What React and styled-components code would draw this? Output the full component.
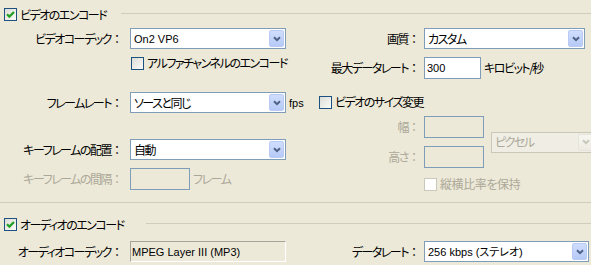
import React from "react";
import styled, { createGlobalStyle } from "styled-components";

const GlobalStyle = createGlobalStyle`
  html, body {
    margin: 0;
    padding: 0;
    background: #ece9d8;
  }
  body {
    width: 591px;
    height: 265px;
    overflow: hidden;
  }
`;

const Panel = styled.div`
  width: 591px;
  height: 265px;
  overflow: hidden;
  background: #ece9d8;
  color: #000;
  font-family: "Noto Sans CJK JP", sans-serif;
  font-size: 12px;
  line-height: 14px;
  font-feature-settings: "palt" 1;
  letter-spacing: -1.5px;
`;

const Header = styled.div`
  display: flex;
  align-items: center;
  height: 13px;
  padding-left: 4px;
  margin-top: ${(p) => p.$top}px;
`;

const HeaderLine = styled.div`
  flex: 1;
  height: 1px;
  margin-left: ${(p) => p.$gap}px;
  margin-top: -2px;
  background: #d0cdbd;
`;

const Divider = styled.div`
  height: 1px;
  margin-top: ${(p) => p.$top}px;
  background: #d0cdbd;
`;

const Body = styled.div`
  display: flex;
  margin-top: ${(p) => p.$top}px;
`;

const LeftCol = styled.div`
  width: 319px;
  display: flex;
  flex-direction: column;
  flex-shrink: 0;
`;

const RightCol = styled.div`
  flex: 1;
  display: flex;
  flex-direction: column;
`;

const Row = styled.div`
  display: flex;
  align-items: center;
  margin-top: ${(p) => p.$top || 0}px;
  padding-left: ${(p) => p.$indent || 0}px;
`;

const LabelBox = styled.span`
  width: ${(p) => p.$w}px;
  margin-right: ${(p) => p.$gap}px;
  text-align: right;
  white-space: nowrap;
  flex-shrink: 0;
  color: ${(p) => (p.$disabled ? "#aca899" : "#000")};
`;

// full-width colon keeps its wide cell, like the old UI font
const Colon = styled.span`
  font-feature-settings: normal;
  letter-spacing: -1px;
`;

const Label = ({ w, gap, disabled, children }) => (
  <LabelBox $w={w} $gap={gap} $disabled={disabled}>
    {children}
    <Colon>：</Colon>
  </LabelBox>
);

const Text = styled.span`
  white-space: nowrap;
  margin-left: ${(p) => p.$gap || 0}px;
  letter-spacing: ${(p) => (p.$spacing !== undefined ? `${p.$spacing}px` : "inherit")};
  color: ${(p) => (p.$disabled ? "#aca899" : "#000")};
`;

const Latin = styled.span`
  font-family: "Liberation Sans", "Noto Sans CJK JP", sans-serif;
  font-size: 11px;
  letter-spacing: 0;
  white-space: nowrap;
  margin-left: ${(p) => p.$gap || 0}px;
`;

/* checkbox */
const CheckRow = styled.label`
  display: flex;
  align-items: center;
  gap: 3px;
`;

const Box = styled.span`
  width: 13px;
  height: 13px;
  box-sizing: border-box;
  flex-shrink: 0;
  display: flex;
  align-items: center;
  justify-content: center;
  border: 1px solid ${(p) => (p.$disabled ? "#cac8bb" : "#1c5180")};
  background: ${(p) =>
    p.$disabled ? "#fff" : "linear-gradient(135deg, #dcdcd7 0%, #fbfbf9 100%)"};
`;

const Check = ({ checked, disabled, spacing, children }) => (
  <CheckRow>
    <Box $disabled={disabled}>
      {checked && (
        <svg width="9" height="9" viewBox="0 0 9 9">
          <path d="M1 4.2 L3.4 6.6 L8 2" fill="none" stroke="#21a121" strokeWidth="2.2" />
        </svg>
      )}
    </Box>
    <Text $disabled={disabled} $spacing={spacing}>
      {children}
    </Text>
  </CheckRow>
);

/* combo box */
const ComboBox = styled.div`
  width: ${(p) => p.$w}px;
  height: 21px;
  box-sizing: border-box;
  flex-shrink: 0;
  display: flex;
  padding: 1px;
  border: 1px solid ${(p) => (p.$disabled ? "#c9c7ba" : "#7f9db9")};
  background: ${(p) => (p.$disabled ? "#f0eee4" : "#fff")};
`;

const ComboValue = styled.div`
  flex: 1;
  display: flex;
  align-items: center;
  padding-left: 2px;
  overflow: hidden;
  color: ${(p) => (p.$disabled ? "#aca899" : "#000")};
`;

const ComboButton = styled.div`
  width: 15px;
  box-sizing: border-box;
  display: flex;
  align-items: center;
  justify-content: center;
  border: 1px solid ${(p) => (p.$disabled ? "#e6e4da" : "#b9cbf5")};
  border-radius: 2px;
  background: ${(p) =>
    p.$disabled
      ? "linear-gradient(#f7f6f1, #edebe2)"
      : "linear-gradient(#d0ddfd, #b6caf7)"};
`;

const Combo = ({ w, disabled, latin, children }) => (
  <ComboBox $w={w} $disabled={disabled}>
    <ComboValue $disabled={disabled}>
      {latin ? <Latin>{children}</Latin> : children}
    </ComboValue>
    <ComboButton $disabled={disabled}>
      <svg width="8" height="6" viewBox="0 0 8 6">
        <path
          d="M1 1.2 L4 4.2 L7 1.2"
          fill="none"
          stroke={disabled ? "#c9c7ba" : "#4d6185"}
          strokeWidth="2"
        />
      </svg>
    </ComboButton>
  </ComboBox>
);

/* edit box */
const Edit = styled.div`
  width: ${(p) => p.$w}px;
  height: 22px;
  box-sizing: border-box;
  flex-shrink: 0;
  display: flex;
  align-items: center;
  padding-left: 2px;
  border: 1px solid #7f9db9;
  background: ${(p) => (p.$disabled ? "#ece9d8" : "#fff")};
`;

const Static = styled.div`
  width: 156px;
  height: 21px;
  box-sizing: border-box;
  flex-shrink: 0;
  display: flex;
  align-items: center;
  padding-left: 1px;
  border: 1px solid #fff;
  border-top-color: #a5a39a;
  border-left-color: #a5a39a;
  background: #ece9d8;
`;

const SizeGroup = styled.div`
  display: flex;
  align-items: center;
  margin-top: ${(p) => p.$top}px;
`;

const SizeFields = styled.div`
  display: flex;
  flex-direction: column;
  gap: 8px;
`;

const L = 122; // left label column width
const LG = 8; // gap after left label
const R = 100; // right label column width
const RG = 5; // gap after right label

export default function App() {
  return (
    <>
      <GlobalStyle />
      <Panel>
        <Header $top={8}>
          <Check checked>ビデオのエンコード</Check>
          <HeaderLine $gap={15} />
        </Header>

        <Body $top={7}>
          <LeftCol>
            <Row>
              <Label w={L} gap={LG}>ビデオコーデック</Label>
              <Combo w={156} latin>On2 VP6</Combo>
            </Row>
            <Row $top={7} $indent={131}>
              <Check>アルファチャンネルのエンコード</Check>
            </Row>
            <Row $top={22}>
              <Label w={L} gap={LG}>フレームレート</Label>
              <Combo w={156}>ソースと同じ</Combo>
              <Latin $gap={3}>fps</Latin>
            </Row>
            <Row $top={26}>
              <Label w={L} gap={LG}>キーフレームの配置</Label>
              <Combo w={156}>自動</Combo>
            </Row>
            <Row $top={8}>
              <Label w={L} gap={LG} disabled>キーフレームの間隔</Label>
              <Edit $w={60} $disabled />
              <Text $gap={3} $disabled>フレーム</Text>
            </Row>
          </LeftCol>

          <RightCol>
            <Row>
              <Label w={R} gap={RG}>画質</Label>
              <Combo w={161}>カスタム</Combo>
            </Row>
            <Row $top={8}>
              <Label w={R} gap={RG}>最大データレート</Label>
              <Edit $w={57}>
                <Latin>300</Latin>
              </Edit>
              <Text $gap={3}>キロビット/秒</Text>
            </Row>
            <Row $top={16}>
              <Check>ビデオのサイズ変更</Check>
            </Row>
            <SizeGroup $top={7}>
              <SizeFields>
                <Row>
                  <Label w={R} gap={RG} disabled>幅</Label>
                  <Edit $w={60} $disabled />
                </Row>
                <Row>
                  <Label w={R} gap={RG} disabled>高さ</Label>
                  <Edit $w={60} $disabled />
                </Row>
              </SizeFields>
              <Row $indent={7}>
                <Combo w={104} disabled>ピクセル</Combo>
              </Row>
            </SizeGroup>
            <Row $top={9} $indent={105}>
              <Check disabled spacing={-0.4}>縦横比率を保持</Check>
            </Row>
          </RightCol>
        </Body>

        <Divider $top={11} />

        <Header $top={15}>
          <Check checked>オーディオのエンコード</Check>
          <HeaderLine $gap={22} />
        </Header>

        <Body $top={10}>
          <LeftCol>
            <Row>
              <Label w={L} gap={LG}>オーディオコーデック</Label>
              <Static>
                <Latin>MPEG Layer III (MP3)</Latin>
              </Static>
            </Row>
          </LeftCol>
          <RightCol>
            <Row>
              <Label w={R} gap={RG}>データレート</Label>
              <Combo w={165} latin>256 kbps (ステレオ)</Combo>
            </Row>
          </RightCol>
        </Body>
      </Panel>
    </>
  );
}
